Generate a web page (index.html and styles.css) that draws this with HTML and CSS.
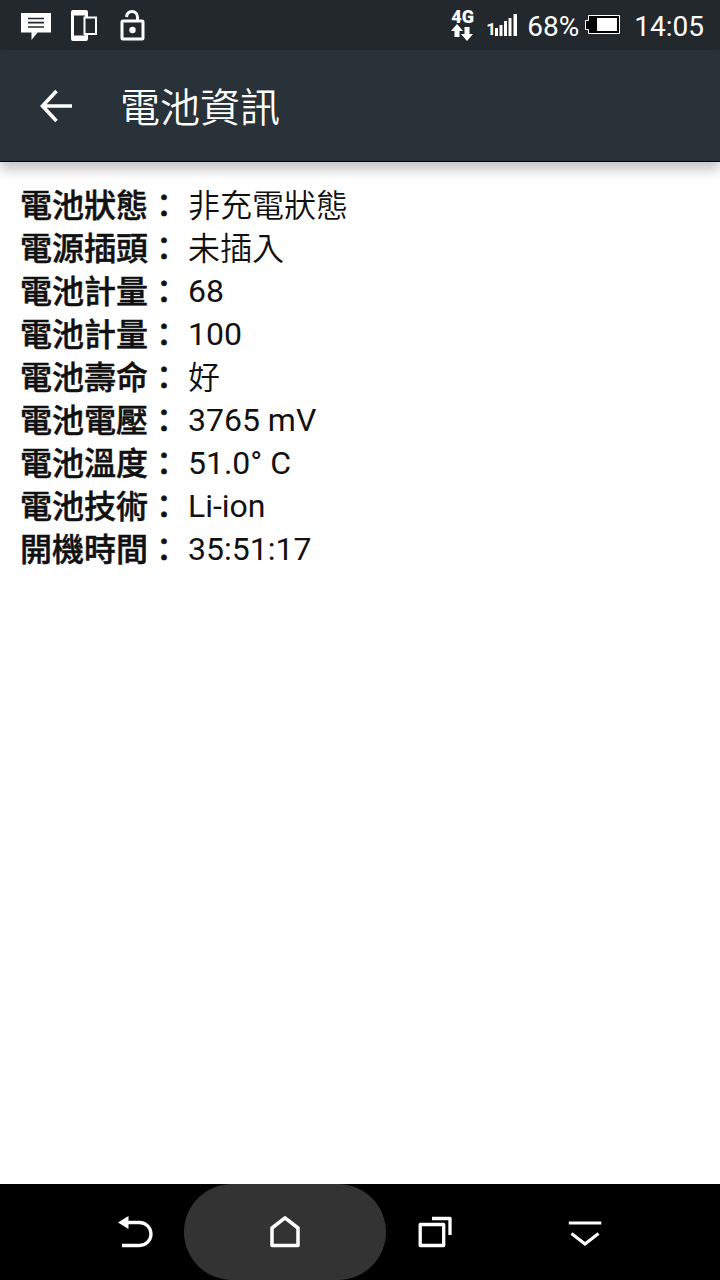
FILE: index.html
```
<!DOCTYPE html>
<html lang="zh-Hant">
<head>
    <meta charset="UTF-8">
    <meta name="viewport" content="width=device-width, initial-scale=1.0">
    <title>電池資訊</title>
    <link rel="stylesheet" href="styles.css">
</head>
<body>
    <div class="statusbar">
        <div class="left-section">
            <svg class="message" width="30" height="32" viewBox="0 0 30 32">
                <path fill="#fff" d="M0 4h30v19.500H16.500l-6 7.500v-7.500H0z"/>
                <path stroke="#23282c" stroke-width="1.700" d="M7 9.500h16M7 13.700h16M7 18h16"/>
            </svg>
            <svg class="devices" width="27" height="32" viewBox="0 0 27 32">
                <path fill="#fff" fill-rule="evenodd" d="M2 1h13q2 0 2 2v27q0 2-2 2H2q-2 0-2-2V3q0-2 2-2zM3 6.500v20h11v-20z"/>
                <path fill="#23282c" stroke="#fff" stroke-width="2" d="M13.500 8.500h11.500v16.500H13.500z"/>
            </svg>
            <svg class="lock" width="26" height="32" viewBox="0 0 26 32">
                <path fill="none" stroke="#fff" stroke-width="3" d="M6.500 8C7 4 9 2.500 12 2.500s5.500 2 5.500 6V11"/>
                <rect x="2" y="12" width="21" height="18" rx="1" fill="none" stroke="#fff" stroke-width="3"/>
                <circle cx="12.500" cy="21" r="3.200" fill="#fff"/>
            </svg>
        </div>
        <div class="right-section">
            <div class="network">
                <span>4G</span>
                <svg width="22" height="18" viewBox="0 0 22 18">
                    <path fill="#fff" d="M6 0l6 7H8.500v6h-5V7H0zM16 17l-6-7h3.500V3h5v7H22z"/>
                </svg>
            </div>
            <div class="signal">
                <span>1</span>
                <svg width="24" height="24" viewBox="0 0 24 24">
                    <path fill="#fff" d="M1 15h3v8H1zM5.500 12h3v11h-3zM10 8h3v15h-3zM14.500 5h3v18h-3zM19.500 1h3.500v22h-3.500z"/>
                </svg>
            </div>
            <span class="percent">68%</span>
            <svg class="battery" width="36" height="22" viewBox="0 0 36 22">
                <path fill="#000" stroke="#fff" d="M3.500 1.500h31v18h-31v-4h-3v-9h3z"/>
                <path fill="#fff" d="M12 4h20v13H12z"/>
            </svg>
            <span class="clock">14:05</span>
        </div>
    </div>

    <div class="navbar">
        <svg width="34" height="34" viewBox="0 0 34 34">
            <path fill="none" stroke="#fff" stroke-width="3.600" d="M17.500 2L3.500 17l14 15M3 17h30"/>
        </svg>
        <h1>電池資訊</h1>
    </div>

    <div class="content">
        <div class="row"><b>電池狀態：</b> <span class="zh">非充電狀態</span></div>
        <div class="row"><b>電源插頭：</b> <span class="zh">未插入</span></div>
        <div class="row"><b>電池計量：</b> 68</div>
        <div class="row"><b>電池計量：</b> 100</div>
        <div class="row"><b>電池壽命：</b> <span class="zh">好</span></div>
        <div class="row"><b>電池電壓：</b> 3765 mV</div>
        <div class="row"><b>電池溫度：</b> 51.0° C</div>
        <div class="row"><b>電池技術：</b> Li-ion</div>
        <div class="row"><b>開機時間：</b> 35:51:17</div>
    </div>

    <div class="bottombar">
        <div class="key back">
            <svg width="36" height="34" viewBox="0 0 36 34">
                <path fill="#fff" d="M1 7.500L11.500 1v13z"/>
                <path fill="none" stroke="#fff" stroke-width="3.300" d="M10 7.500h12.500a11.500 11.500 0 0 1 0 23H5"/>
            </svg>
        </div>
        <div class="key active">
            <svg width="34" height="34" viewBox="0 0 34 34">
                <path fill="none" stroke="#fff" stroke-width="3.500" stroke-linejoin="round" d="M4 13L17 2.800 30 13v17.500H4z"/>
            </svg>
        </div>
        <div class="key">
            <svg width="34" height="34" viewBox="0 0 34 34">
                <path fill="none" stroke="#fff" stroke-width="3.300" stroke-linejoin="round" d="M2.200 9.500h23.500v21H2.200z"/>
                <path fill="none" stroke="#fff" stroke-width="3.300" stroke-linejoin="round" d="M14 3.500h18v16.500"/>
            </svg>
        </div>
        <div class="key">
            <svg width="34" height="34" viewBox="0 0 34 34">
                <path fill="none" stroke="#fff" stroke-width="3.200" d="M.8 8h32.500M3.500 18.500L17 29l13.500-10.500"/>
            </svg>
        </div>
    </div>
</body>
</html>
```

FILE: styles.css
```
body {
    margin: 0;
    height: 1280px;
    display: flex;
    flex-direction: column;
    overflow: hidden;
    background-color: #fff;
    color: #111;
    font-family: Roboto, "Noto Sans CJK TC", sans-serif;
}

svg {
    display: block;
    flex-shrink: 0;
}

.statusbar {
    height: 50px;
    box-sizing: border-box;
    padding: 0 16px 0 21px;
    display: flex;
    justify-content: space-between;
    align-items: center;
    background-color: #23282c;
    color: #fff;
}
.statusbar .left-section,
.statusbar .right-section {
    display: flex;
    align-items: center;
}
.message {
    margin-right: 20px;
}
.devices {
    margin-right: 22px;
}
.network {
    width: 22px;
    margin-right: 13px;
}
.network span {
    display: block;
    height: 15px;
    line-height: 16px;
    font-size: 18px;
    font-weight: 900;
    text-align: center;
}
.signal {
    display: flex;
    align-items: flex-end;
    margin-right: 9px;
}
.signal span {
    font-size: 17px;
    font-weight: bold;
    line-height: 15px;
    width: 8px;
}
.percent {
    font-size: 28px;
    line-height: 32px;
    padding-top: 4px;
    margin-right: 6px;
}
.clock {
    font-size: 28px;
    line-height: 32px;
    padding-top: 4px;
    margin-left: 13px;
}

.navbar {
    height: 112px;
    box-sizing: border-box;
    padding-left: 39px;
    display: flex;
    align-items: center;
    background-color: #283238;
    border-bottom: 1px solid #05090c;
    box-shadow: 0 7px 12px rgba(0, 0, 0, 0.25);
}
.navbar h1 {
    margin: 0 0 0 47px;
    padding-top: 6px;
    color: #fff;
    font-size: 40px;
    font-weight: 350;
    line-height: 60px;
}

.content {
    flex: 1;
    padding: 22px 20px;
}
.row {
    height: 43px;
    line-height: 43px;
    font-size: 32px;
    white-space: nowrap;
}
.row b {
    font-weight: 500;
    -webkit-text-stroke: 0.5px #111;
}
.row b,
.row .zh {
    display: inline-block;
    padding-top: 1px;
    margin-bottom: -1px;
    vertical-align: top;
}
.row .zh {
    font-weight: 350;
}

.bottombar {
    height: 96px;
    padding: 0 34px;
    display: flex;
    justify-content: center;
    background-color: #000;
}
.key {
    width: 150px;
    display: flex;
    justify-content: center;
    align-items: center;
}
.key.active {
    width: 202px;
    margin: 0 -26px;
    border-radius: 48px;
    background-color: #333;
}
```
